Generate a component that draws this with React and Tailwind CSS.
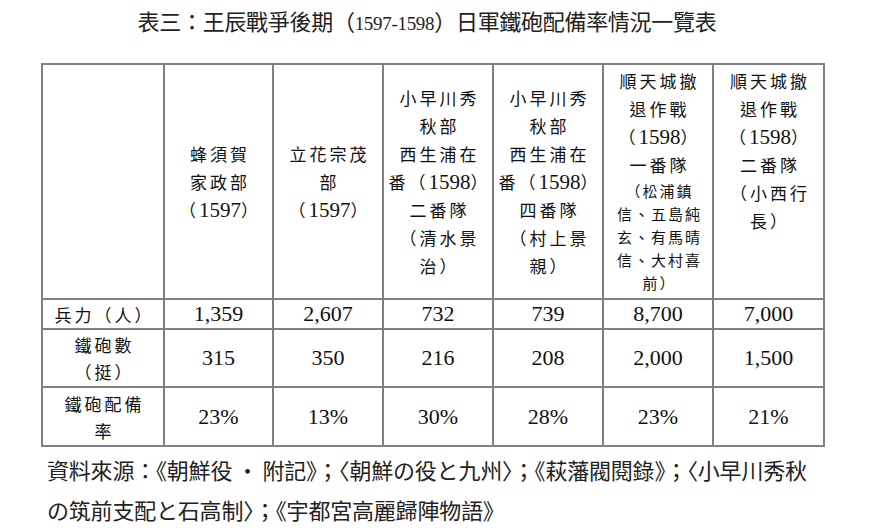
import React from "react";

const headers = [
  { lines: [] },
  { lines: ["蜂須賀", "家政部", "（1597）"] },
  { lines: ["立花宗茂", "部", "（1597）"] },
  { lines: ["小早川秀", "秋部", "西生浦在", "番（1598）", "二番隊", "（清水景", "治）"] },
  { lines: ["小早川秀", "秋部", "西生浦在", "番（1598）", "四番隊", "（村上景", "親）"] },
  {
    top: true,
    lines: ["順天城撤", "退作戰", "（1598）", "一番隊"],
    small: ["（松浦鎮", "信、五島純", "玄、有馬晴", "信、大村喜", "前）"],
  },
  { top: true, lines: ["順天城撤", "退作戰", "（1598）", "二番隊", "（小西行", "長）"] },
];

const rows = [
  { label: ["兵力（人）"], h: "h-[30px]", values: ["1,359", "2,607", "732", "739", "8,700", "7,000"] },
  { label: ["鐵砲數", "（挺）"], h: "h-[58px]", values: ["315", "350", "216", "208", "2,000", "1,500"] },
  { label: ["鐵砲配備", "率"], h: "h-[59px]", values: ["23%", "13%", "30%", "28%", "23%", "21%"] },
];

// splits a line so digits render in the serif face at a larger size
function Mixed({ text }) {
  const parts = text.split(/(\d+)/);
  return parts.map((p, i) =>
    /^\d+$/.test(p) ? (
      <span key={i} className="font-['Liberation_Serif',serif] text-[21px] tracking-normal">
        {p}
      </span>
    ) : (
      <span key={i}>{p}</span>
    )
  );
}

export default function App() {
  const cell = "border-2 border-[#808080] text-center p-0";
  return (
    <div className="w-[872px] h-[532px] bg-white overflow-hidden text-[#111] pt-[6px]">
      <h1 className="text-center text-[22px] leading-[28px] font-['Noto_Sans_CJK_TC',sans-serif] text-[#222] pr-[18px] tracking-[-0.3px]">
        表三：王辰戰爭後期（<span className="font-['Liberation_Serif',serif] text-[19px]">1597-1598</span>）日軍鐵砲配備率情況一覽表
      </h1>

      <table className="ml-[41px] mt-[25px] w-[782px] table-fixed border-collapse">
        <colgroup>
          <col className="w-[122px]" />
          <col className="w-[109px]" />
          <col className="w-[110px]" />
          <col className="w-[110px]" />
          <col className="w-[110px]" />
          <col className="w-[110px]" />
          <col className="w-[111px]" />
        </colgroup>
        <tbody>
          <tr className="h-[235px]">
            {headers.map((h, i) => (
              <td
                key={i}
                className={`${cell} ${h.top ? "align-top pt-[2px]" : "align-middle"} font-['Noto_Sans_CJK_TC',sans-serif] text-[17px] leading-[28px] tracking-[3px] pl-[3px]`}
              >
                {h.lines.map((l, j) => (
                  <div key={j} className="whitespace-nowrap h-[28px]">
                    <Mixed text={l} />
                  </div>
                ))}
                {h.small &&
                  h.small.map((l, j) => (
                    <div key={j} className="whitespace-nowrap text-[15px] leading-[23px] tracking-[2px]">
                      {l}
                    </div>
                  ))}
              </td>
            ))}
          </tr>
          {rows.map((r, i) => (
            <tr key={i} className={r.h}>
              <td className={`${cell} align-middle font-['Noto_Sans_CJK_TC',sans-serif] text-[17px] leading-[27px] tracking-[3px] pl-[3px]`}>
                {r.label.map((l, j) => (
                  <div key={j} className="whitespace-nowrap">
                    {l}
                  </div>
                ))}
              </td>
              {r.values.map((v, j) => (
                <td key={j} className={`${cell} align-middle font-['Liberation_Serif',serif] text-[22px] leading-[24px]`}>
                  {v}
                </td>
              ))}
            </tr>
          ))}
        </tbody>
      </table>

      <div className="ml-[47px] mt-[2px] w-[800px] text-[22px] leading-[40px] font-['Noto_Sans_CJK_TC',sans-serif] text-[#222] tracking-[-0.2px]">
        <div className="whitespace-nowrap">資料來源：《朝鮮役{"\u2009"}•{"\u2009"}附記》；〈朝鮮の役と九州〉；《萩藩閥閱錄》；〈小早川秀秋</div>
        <div className="whitespace-nowrap">の筑前支配と石高制〉；《宇都宮高麗歸陣物語》</div>
      </div>
    </div>
  );
}
